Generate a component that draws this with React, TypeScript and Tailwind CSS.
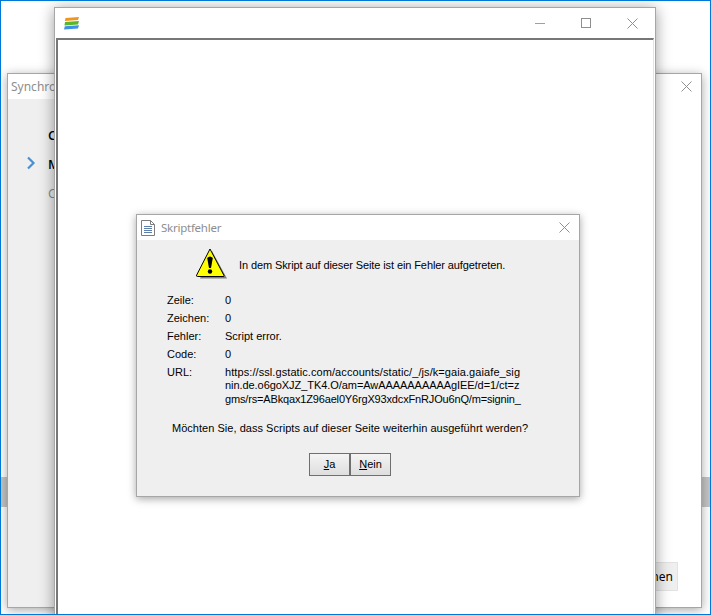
export default function App() {
  const sans = "font-['Liberation_Sans',Arial,sans-serif]";
  const rows: [string, string][] = [
    ["Zeile:", "0"],
    ["Zeichen:", "0"],
    ["Fehler:", "Script error."],
    ["Code:", "0"],
  ];
  const CloseIcon = ({ size = 11 }: { size?: number }) => (
    <svg width={size} height={size} viewBox="0 0 11 11">
      <path d="M0.5 0.5 L10.5 10.5 M10.5 0.5 L0.5 10.5" stroke="#8f8f8f" strokeWidth="1" fill="none" />
    </svg>
  );
  return (
    <div className={`relative w-[711px] h-[615px] overflow-hidden bg-white border border-[#0078d7] ${sans}`}>
      {/* backdrop band */}
      <div className="absolute left-0 right-0 top-[476px] h-[30px] bg-[#c6c6c6]" />

      {/* Synchronize window */}
      <div className="absolute left-[6px] top-[72px] w-[695px] h-[535px] bg-white border border-[#a6a6a6] shadow-[0_2px_10px_rgba(0,0,0,0.35)] font-['Open_Sans',sans-serif]">
        <div className="h-[25px] flex items-center justify-between pl-[3px] pr-[9px] text-[12px] text-[#8e8e8e]">
          <span className="font-['Noto_Sans',sans-serif]">Synchronisierung</span>
          <CloseIcon />
        </div>
        <div className="absolute left-0 top-[25px] bottom-0 w-[60px] bg-[#efefef]">
          <div className="absolute left-[40px] top-[27px] text-[13px] font-semibold text-black leading-[18px]">C</div>
          <svg className="absolute left-[18px] top-[57px]" width="10" height="14" viewBox="0 0 10 14">
            <path d="M2 1.5 L7.5 7 L2 12.5" stroke="#4a90d0" strokeWidth="2.2" fill="none" />
          </svg>
          <div className="absolute left-[40px] top-[56px] text-[13px] font-semibold text-black leading-[18px]">M</div>
          <div className="absolute left-[40px] top-[85px] text-[13px] text-[#8a8a8a] leading-[18px]">C</div>
        </div>
        <div className="absolute left-[570px] top-[488px] w-[100px] h-[29px] bg-[#efefef] border border-[#e2e2e2] flex items-center justify-end pr-[4px] text-[12px] text-black font-['Noto_Sans',sans-serif] whitespace-nowrap">
          Übernehmen
        </div>
      </div>

      {/* Browser window */}
      <div className="absolute left-[53px] top-[6px] w-[602px] h-[640px] bg-white border border-[#a6a6a6] shadow-[0_2px_14px_rgba(0,0,0,0.4)]">
        <div className="h-[30px] flex items-center justify-between pl-[9px]">
          <svg width="15" height="13" viewBox="0 0 15 13">
            <path d="M1.5 1 L15 0 L14 3 L0.8 4 Z" fill="#f0951e" />
            <path d="M1 5 L15 4 L14 7.5 L0.5 8.5 Z" fill="#58b82c" />
            <path d="M0.8 9.3 L15 8.3 L14 11.5 L0 12.5 Z" fill="#3f8fe8" />
          </svg>
          <div className="flex items-center">
            <div className="w-[46px] flex justify-center">
              <div className="w-[10px] h-px bg-[#a0a0a0]" />
            </div>
            <div className="w-[46px] flex justify-center">
              <div className="w-[10px] h-[10px] border border-[#8f8f8f]" />
            </div>
            <div className="w-[46px] flex justify-center">
              <CloseIcon />
            </div>
          </div>
        </div>
        <div className="absolute left-px top-[30px] right-px bottom-0 border-t-2 border-l-2 border-t-[#777777] border-l-[#777777] border-r border-r-[#e3e3e3] bg-white" />
      </div>

      {/* Script error dialog */}
      <div className="absolute left-[135px] top-[213px] w-[444px] h-[283px] bg-[#efefef] border border-[#a6a6a6] shadow-[0_2px_8px_rgba(0,0,0,0.35)] text-[11px] leading-[13px] text-black">
        <div className="h-[25px] bg-white flex items-center justify-between pl-[4px] pr-[9px]">
          <div className="flex items-center gap-[6px]">
            <svg width="14" height="16" viewBox="0 0 14 16">
              <path d="M0.5 0.5 H9.5 L13.5 4.5 V15.5 H0.5 Z" fill="#ffffff" stroke="#7d7d7d" />
              <path d="M9.5 0.5 V4.5 H13.5" fill="none" stroke="#7d7d7d" />
              <path d="M3 6.5 H11 M3 8.5 H11 M3 10.5 H11 M3 12.5 H11" stroke="#5f7fa8" />
            </svg>
            <span className="text-[11.5px] tracking-[-0.25px] text-[#8e8e8e] font-['Noto_Sans',sans-serif]">Skriptfehler</span>
          </div>
          <CloseIcon />
        </div>

        <div className="relative">
          <div className="flex items-center h-[50px] pl-[59px] pt-[1px]">
            <svg className="shrink-0 -translate-y-[2px]" width="32" height="32" viewBox="0 0 32 32">
              <path d="M16 3 L31 30.5 H4 Z" fill="#808080" />
              <path d="M14 1 L28 27.5 Q28.5 28.5 27 28.5 H1.5 Q0 28.5 0.7 27 Z" fill="#ffff00" stroke="#000000" strokeWidth="1" strokeLinejoin="round" />
              <path d="M11.2 10 Q14 7 16.8 10 L15 20 H13 Z" fill="#000000" />
              <circle cx="14" cy="23.5" r="2.2" fill="#000000" />
            </svg>
            <span className="ml-[11px] tracking-[-0.1px]">In dem Skript auf dieser Seite ist ein Fehler aufgetreten.</span>
          </div>

          <div className="pl-[30px] mt-[1px] flex flex-col">
            {rows.map(([k, v]) => (
              <div key={k} className="flex h-[18px] items-center">
                <span className="w-[58px]">{k}</span>
                <span>{v}</span>
              </div>
            ))}
            <div className="flex pt-[3px]">
              <span className="w-[58px]">URL:</span>
              <div className="whitespace-pre">
                <div className="h-[13px] tracking-[0.08px]">https://ssl.gstatic.com/accounts/static/_/js/k=gaia.gaiafe_sig</div>
                <div className="h-[14px] tracking-[-0.06px]">nin.de.o6goXJZ_TK4.O/am=AwAAAAAAAAAAgIEE/d=1/ct=z</div>
                <div className="h-[14px] tracking-[-0.16px]">gms/rs=ABkqax1Z96ael0Y6rgX93xdcxFnRJOu6nQ/m=signin_</div>
              </div>
            </div>
          </div>

          <div className="mt-[15px] pl-[35px] tracking-[0.03px]">Möchten Sie, dass Scripts auf dieser Seite weiterhin ausgeführt werden?</div>

          <div className="mt-[18px] flex pl-[172px]">
            <button className="w-[41px] h-[23px] border border-[#6f6f6f] bg-gradient-to-b from-[#f4f4f4] to-[#dedede] text-[11px] text-black">
              <span className="underline">J</span>a
            </button>
            <button className="w-[41px] h-[23px] border border-[#6f6f6f] bg-gradient-to-b from-[#f4f4f4] to-[#dedede] text-[11px] text-black">
              <span className="underline">N</span>ein
            </button>
          </div>
        </div>
      </div>
    </div>
  );
}
